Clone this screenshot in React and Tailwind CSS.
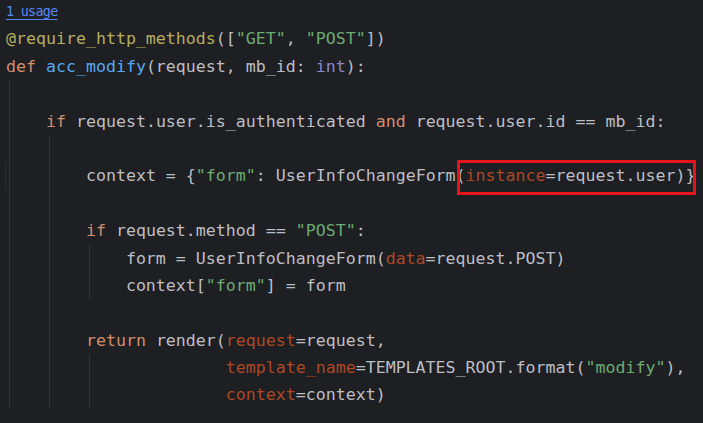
const C = {
  txt: "text-[#bcbec4]",
  kw: "text-[#cf8e6d]",
  fn: "text-[#56a8f5]",
  str: "text-[#6aab73]",
  deco: "text-[#b3ae60]",
  arg: "text-[#aa4926]",
  bi: "text-[#8888c6]",
};

// each line: [indent, segments, guides]
const lines = [
  null,
  [0, [["deco", "@require_http_methods"], ["txt", "(["], ["str", '"GET"'], ["txt", ", "], ["str", '"POST"'], ["txt", "])"]], []],
  [0, [["kw", "def "], ["fn", "acc_modify"], ["txt", "(request, mb_id: "], ["bi", "int"], ["txt", "):"]], []],
  [0, [], [0]],
  [4, [["kw", "if "], ["txt", "request.user.is_authenticated "], ["kw", "and "], ["txt", "request.user.id == mb_id:"]], [0]],
  [0, [], [0, 1]],
  "box",
  [0, [], [0, 1]],
  [8, [["kw", "if "], ["txt", "request.method == "], ["str", '"POST"'], ["txt", ":"]], [0, 1]],
  [12, [["txt", "form = UserInfoChangeForm("], ["arg", "data"], ["txt", "=request.POST)"]], [0, 1, 2]],
  [12, [["txt", "context["], ["str", '"form"'], ["txt", "] = form"]], [0, 1, 2]],
  [0, [], [0, 1]],
  [8, [["kw", "return "], ["txt", "render("], ["arg", "request"], ["txt", "=request,"]], [0, 1]],
  [22, [["arg", "template_name"], ["txt", "=TEMPLATES_ROOT.format("], ["str", '"modify"'], ["txt", "),"]], [0, 1, 2]],
  [22, [["arg", "context"], ["txt", "=context)"]], [0, 1, 2]],
];

const guideLeft = ["left-[3px]", "left-[43px]", "left-[83px]"];

function Guides({ list }) {
  return list.map((g) => (
    <span key={g} className={`absolute top-0 bottom-0 w-px bg-[#313438] ${guideLeft[g]}`} />
  ));
}

function Line({ indent, segs, guides }) {
  return (
    <div className="relative h-[27.4px] whitespace-pre leading-[27.4px]">
      <Guides list={guides} />
      <span>{" ".repeat(indent)}</span>
      {segs.map(([k, t], i) => (
        <span key={i} className={C[k]}>
          {t}
        </span>
      ))}
    </div>
  );
}

export default function App() {
  return (
    <div
      className="h-[423px] w-[703px] overflow-hidden bg-[#1e1f22] pl-[6px] text-[16.6px] text-[#bcbec4]"
      style={{ fontFamily: '"DejaVu Sans Mono", "Liberation Mono", monospace' }}
    >
      <div className="-mt-[2px]">
        <div className="flex h-[27.4px] items-center">
          <span className="text-[13.4px] tracking-[-0.7px] text-[#548af7] underline decoration-1 underline-offset-[3px]">1 usage</span>
        </div>
        {lines.slice(1).map((l, i) =>
          l === "box" ? (
            <div key={i} className="relative h-[27.4px] whitespace-pre leading-[27.4px]">
              <Guides list={[0, 1]} />
              <span className="absolute left-[-1px] top-0 bottom-0 w-px bg-[#2b2d30]" />
              <span>{" ".repeat(8)}</span>
              <span>context = {"{"}</span>
              <span className={C.str}>"form"</span>
              <span>: UserInfoChangeForm</span>
              <span className="relative">
                (<span className={C.arg}>instance</span>=request.user){"}"}
                <span className="absolute left-[1px] -right-[1px] -top-[6px] -bottom-[10px] border-[3px] border-[#e5141b]" />
              </span>
            </div>
          ) : (
            <Line key={i} indent={l[0]} segs={l[1]} guides={l[2]} />
          )
        )}
      </div>
    </div>
  );
}
